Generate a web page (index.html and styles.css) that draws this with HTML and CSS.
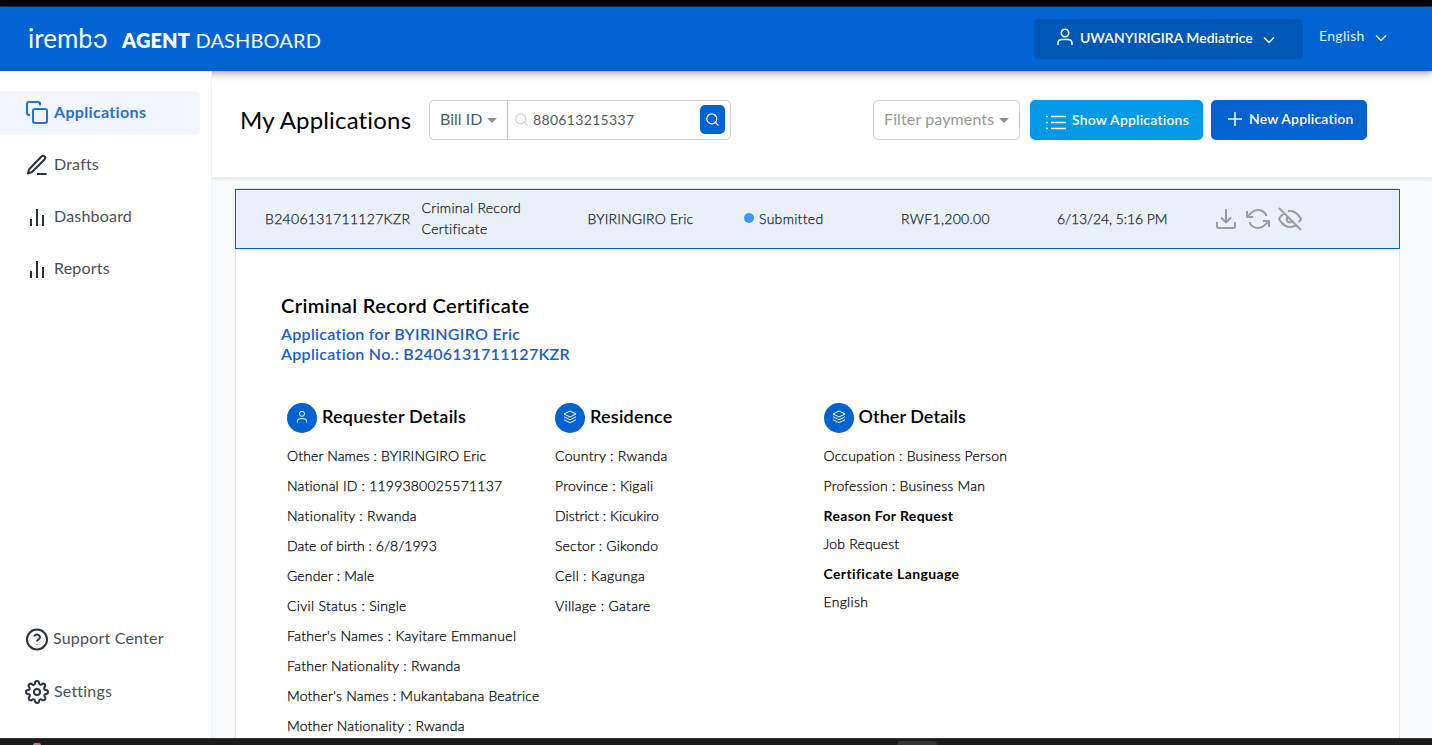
FILE: index.html
```html
<!DOCTYPE html>
<html lang="en">
<head>
<meta charset="utf-8">
<title>Agent Dashboard</title>
<link rel="stylesheet" href="styles.css">
</head>
<body>
<div class="screen">
  <div class="chrome-top"></div>
  <header class="header">
    <div class="brand">
      <span class="logo">irembo</span>
      <span class="product"><b>AGENT</b> <span>DASHBOARD</span></span>
    </div>
    <div class="account">
      <svg class="user-icon" width="18" height="18" viewBox="0 0 18 18"><circle cx="9" cy="5" r="3.7"/><path d="M2 17v-1.500q0-4 4-4h6q4 0 4 4V17"/></svg>
      <span class="account-name">UWANYIRIGIRA Mediatrice</span>
      <svg class="chevron" width="12" height="8" viewBox="0 0 12 8"><path d="M1 1.500l5 5 5-5"/></svg>
    </div>
    <div class="language">
      <span>English</span>
      <svg class="chevron" width="12" height="8" viewBox="0 0 12 8"><path d="M1 1.500l5 5 5-5"/></svg>
    </div>
  </header>
  <div class="body">
    <nav class="sidebar">
      <div class="menu">
        <a class="item active"><svg width="24" height="24" viewBox="0 0 24 24"><rect x="8" y="8" width="14" height="14" rx="2"/><path d="M5 14H4a2 2 0 0 1-2-2V3a2 2 0 0 1 2-2h9a2 2 0 0 1 2 2v1.500"/></svg><span class="t-apps">Applications</span></a>
        <a class="item"><svg width="24" height="24" viewBox="0 0 24 24"><path d="M12 21h9.500M16.500 3.500a2.120 2.120 0 0 1 3 3L7 19l-4 1.500 1-4z"/></svg><span>Drafts</span></a>
        <a class="item"><svg width="24" height="24" viewBox="0 0 24 24"><path d="M18 21V10M12 21V4M6 21V14"/></svg><span>Dashboard</span></a>
        <a class="item"><svg width="24" height="24" viewBox="0 0 24 24"><path d="M18 21V10M12 21V4M6 21V14"/></svg><span>Reports</span></a>
      </div>
      <div class="menu menu-bottom">
        <a class="item"><svg width="24" height="24" viewBox="0 0 24 24"><circle cx="12" cy="12.500" r="10"/><path d="M9.100 9.500a3 3 0 0 1 5.800 1c0 2-3 2.500-3 4M12 17.300v.500"/></svg><span class="t-support">Support Center</span></a>
        <a class="item"><svg width="24" height="24" viewBox="0 0 24 24"><circle cx="12" cy="12" r="3"/><path d="M19.400 15a1.650 1.650 0 0 0 .33 1.820l.06.06a2 2 0 1 1-2.830 2.830l-.06-.06a1.650 1.650 0 0 0-2.800 1.170V21a2 2 0 0 1-4 0v-.09A1.650 1.650 0 0 0 9 19.400a1.650 1.650 0 0 0-1.820.33l-.06.06a2 2 0 1 1-2.830-2.830l.06-.06A1.650 1.650 0 0 0 3.090 14H3a2 2 0 0 1 0-4h.09A1.650 1.650 0 0 0 4.600 9a1.650 1.650 0 0 0-.33-1.820l-.06-.06a2 2 0 1 1 2.830-2.830l.06.06A1.650 1.650 0 0 0 10 3.090V3a2 2 0 0 1 4 0v.09a1.650 1.650 0 0 0 2.820 1.180l.06-.06a2 2 0 1 1 2.830 2.830l-.06.06A1.650 1.650 0 0 0 20.910 10H21a2 2 0 0 1 0 4h-.09a1.650 1.650 0 0 0-1.510 1z"/></svg><span>Settings</span></a>
      </div>
    </nav>
    <main class="main">
      <div class="toolbar">
        <h1>My Applications</h1>
        <div class="search">
          <div class="search-kind"><span>Bill ID</span><i class="caret"></i></div>
          <div class="search-field">
            <svg class="magnifier" width="13" height="13" viewBox="0 0 13 13"><circle cx="5.800" cy="5.800" r="5"/><path d="M9.500 9.500l3 3"/></svg>
            <span>880613215337</span>
            <div class="search-button"><svg width="13" height="13" viewBox="0 0 13 13"><circle cx="5.800" cy="5.800" r="5"/><path d="M9.500 9.500l3 3"/></svg></div>
          </div>
        </div>
        <div class="filter"><span>Filter payments</span><i class="caret"></i></div>
        <div class="button show"><svg width="20" height="15" viewBox="0 0 20 15"><path d="M5 1.500h15M5 7.500h15M5 13.500h15"/><path d="M0 1.500h2M0 7.500h2M0 13.500h2"/></svg><span>Show Applications</span></div>
        <div class="button new"><svg width="14" height="14" viewBox="0 0 14 14"><path d="M7 0v14M0 7h14"/></svg><span>New Application</span></div>
      </div>
      <div class="content">
        <div class="row">
          <span>B2406131711127KZR</span>
          <span>Criminal Record<br>Certificate</span>
          <span class="c-name">BYIRINGIRO Eric</span>
          <span class="c-status"><i class="dot"></i>Submitted</span>
          <span>RWF1,200.00</span>
          <span class="c-date">6/13/24, 5:16 PM</span>
          <span class="actions">
            <svg width="24" height="24" viewBox="0 0 24 24"><path d="M3 15v4.500A1.500 1.500 0 0 0 4.500 21h15a1.500 1.500 0 0 0 1.500-1.500V15M12 2v13M7 10.500l5 5 5-5"/></svg>
            <svg width="24" height="24" viewBox="0 0 24 24"><path d="M1 4v6h6M23 20v-6h-6"/><path d="M20.500 9A9 9 0 0 0 5.600 5.600L1 10m22 4l-4.600 4.400A9 9 0 0 1 3.500 15"/></svg>
            <svg width="24" height="24" viewBox="0 0 24 24"><path d="M17.900 17.900A10 10 0 0 1 12 20C5 20 1 12 1 12a18.500 18.500 0 0 1 5-5.900M9.900 4.200A9 9 0 0 1 12 4c7 0 11 8 11 8a18.500 18.500 0 0 1-2.200 3.200M14.100 14.100a3 3 0 1 1-4.200-4.200M1 1l22 22"/></svg>
          </span>
        </div>
        <section class="details">
          <h2>Criminal Record Certificate</h2>
          <p class="sub s1">Application for BYIRINGIRO Eric</p>
          <p class="sub">Application No.: B2406131711127KZR</p>
          <div class="columns">
            <div class="column">
              <h3><i class="badge"><svg width="14" height="14" viewBox="0 0 14 14"><circle cx="7" cy="3.800" r="2.500"/><path d="M2.300 12.500v-1q0-2.800 2.800-2.800h3.800q2.800 0 2.800 2.800v1"/></svg></i><span>Requester Details</span></h3>
              <p class="snug">Other Names : BYIRINGIRO Eric</p>
              <p>National ID : 1199380025571137</p>
              <p class="wide">Nationality : Rwanda</p>
              <p class="tight">Date of birth : 6/8/1993</p>
              <p class="snug">Gender : Male</p>
              <p class="wide">Civil Status : Single</p>
              <p class="wide">Father's Names : Kayitare Emmanuel</p>
              <p class="wide">Father Nationality : Rwanda</p>
              <p>Mother's Names : Mukantabana Beatrice</p>
              <p>Mother Nationality : Rwanda</p>
            </div>
            <div class="column">
              <h3><i class="badge"><svg width="14" height="14" viewBox="0 0 14 14"><path d="M7 1l6 3-6 3-6-3zM1 6.800l6 3 6-3M1 9.700l6 3 6-3"/></svg></i><span>Residence</span></h3>
              <p class="wide">Country : Rwanda</p>
              <p>Province : Kigali</p>
              <p class="tight">District : Kicukiro</p>
              <p>Sector : Gikondo</p>
              <p class="wide">Cell : Kagunga</p>
              <p class="wide">Village : Gatare</p>
            </div>
            <div class="column">
              <h3><i class="badge"><svg width="14" height="14" viewBox="0 0 14 14"><path d="M7 1l6 3-6 3-6-3zM1 6.800l6 3 6-3M1 9.700l6 3 6-3"/></svg></i><span class="h-oth">Other Details</span></h3>
              <p>Occupation : Business Person</p>
              <p>Profession : Business Man</p>
              <p class="label">Reason For Request</p>
              <p class="value">Job Request</p>
              <p class="label">Certificate Language</p>
              <p class="value wide">English</p>
            </div>
          </div>
        </section>
      </div>
    </main>
  </div>
  <div class="chrome-bottom"><i class="pink"></i><i class="tab"></i></div>
</div>
</body>
</html>
```
FILE: styles.css
```css
* { box-sizing: border-box; }
body { margin: 0; font-family: Lato, "Open Sans", sans-serif; font-size: 14px; color: #000; }
h1, h2, h3, p { margin: 0; }
i { font-style: normal; display: block; flex: none; }
span { white-space: nowrap; }
svg { display: block; flex: none; fill: none; stroke: currentColor; stroke-width: 2; stroke-linejoin: round; }

.screen { height: 745px; display: flex; flex-direction: column; overflow: hidden; }
.chrome-top { height: 7px; flex: none; background: #060606; border-bottom: 1px solid #2c3136; }
.chrome-bottom { height: 7px; flex: none; background: #1b1b1b; border-top: 1px solid #363636; display: flex; align-items: flex-end; overflow: hidden; z-index: 3; }
.pink { width: 8px; height: 2px; margin-left: 33px; background: #b77c98; border-radius: 4px 4px 0 0; }
.tab { width: 40px; height: 4px; margin-left: 856px; background: #343434; border-radius: 4px 4px 0 0; }

.header { height: 64px; flex: none; background: #0063d1; color: #fff; display: flex; align-items: flex-start; box-shadow: 0 2px 8px rgba(0,0,0,.4); z-index: 1; }
.brand { display: flex; align-items: flex-start; width: 1034px; padding: 16px 0 0 28px; }
.logo { position: relative; width: 94px; font-size: 26px; line-height: 31px; letter-spacing: 0; font-weight: 400; }
.logo::after { content: ""; position: absolute; left: 63px; top: 15px; width: 6px; height: 4px; background: #0063d1; }
.product { font-size: 20px; line-height: 34px; letter-spacing: .15px; }
.product b { font-weight: 800; }
.account { width: 269px; height: 40px; margin-top: 12px; padding: 0 0 0 22px; display: flex; align-items: center; background: #0057b8; border-radius: 4px; }
.user-icon { stroke-width: 1.6; margin-top: -4px; }
.account-name { margin: -3px 0 0 6px; width: 173px; font-weight: 600; }
.chevron { stroke-width: 1.4; margin-left: 10px; margin-top: 2px; }
.language { display: flex; align-items: center; height: 20px; margin: 20px 0 0 16px; color: #e4eefa; }
.language span { width: 46px; margin-top: -3px; letter-spacing: .3px; }
.language .chevron { margin-top: 1px; }

.body { flex: 1; min-height: 0; display: flex; }
.sidebar { width: 212px; flex: none; background: #fff; border-right: 1px solid #eef2f7; display: flex; flex-direction: column; justify-content: space-between; padding: 20px 0 24px; z-index: 2; }
.menu { display: flex; flex-direction: column; gap: 8px; }
.menu-bottom { gap: 9px; }
.item { height: 44px; width: 200px; padding-left: 25px; display: flex; align-items: center; font-size: 16px; color: #4a5058; border-radius: 0 6px 6px 0; }
.item svg { color: #29323d; }
.item span { margin: -3px 0 0 5px; letter-spacing: .2px; }
.item.active { background: #f1f6fe; color: #2a6fd6; font-weight: 700; }
.item.active svg { color: #1f74de; }
.item .t-apps { letter-spacing: .33px; }
.item .t-support { margin-left: 4px; }

.main { flex: 1; min-width: 0; background: #f7f9fb; display: flex; flex-direction: column; }
.toolbar { height: 107px; flex: none; background: #fff; border-bottom: 1px solid #e9f1f5; box-shadow: 0 1px 3px rgba(0,0,0,.09); padding: 29px 0 0 28px; display: flex; align-items: flex-start; }
h1 { width: 189px; font-size: 24px; line-height: 40px; font-weight: 400; white-space: nowrap; letter-spacing: .17px; }
.search { width: 302px; height: 40px; border: 1px solid #ced4da; border-radius: 5px; display: flex; color: #565a5e; }
.search-kind { width: 78px; flex: none; border-right: 1px solid #ced4da; padding-left: 10px; display: flex; align-items: center; font-size: 16px; }
.search-kind span { width: 42px; margin-top: -3px; }
.caret { border: 5px solid transparent; border-top-color: #8e8e8e; border-bottom: 0; margin-left: 5px; }
.search-field { flex: 1; display: flex; align-items: center; padding: 0 5px 2px 7px; font-size: 14px; }
.search-field span { flex: 1; margin: 1px 0 0 5px; letter-spacing: .33px; }
.magnifier { color: #ced4da; stroke-width: 1.2; }
.search-button { width: 25px; height: 29px; background: #0063d1; color: #fff; border-radius: 5px; display: grid; place-items: center; }
.search-button svg { stroke-width: 1.2; }
.filter { width: 147px; height: 40px; margin-left: 142px; border: 1px solid #ced4da; border-radius: 5px; display: flex; align-items: center; padding-left: 10px; font-size: 16px; color: #999; }
.filter span { width: 111px; margin-top: -3px; letter-spacing: .12px; }
.filter .caret { margin-left: 4px; }
.button { height: 40px; border-radius: 5px; display: flex; align-items: center; color: #fff; font-weight: 600; }
.show { width: 173px; margin-left: 10px; padding: 0 0 1px 16px; background: #0099e6; letter-spacing: .2px; }
.show svg { margin-top: 5px; stroke-width: 1.7; }
.show span { margin-left: 6px; }
.new { width: 156px; margin-left: 8px; padding: 0 0 3px 17px; background: #0063d1; letter-spacing: .16px; }
.new svg { stroke-width: 1.5; margin-top: 1px; }
.new span { margin-left: 7px; }

.content { flex: 1; min-height: 0; overflow: hidden; margin: 10px 32px 0 23px; display: flex; flex-direction: column; border-top: 1px solid #dcdfe3; }
.row { height: 60px; flex: none; border: 1px solid #0b5fc5; background: #e9f0f8; display: grid; grid-template-columns: 156.500px 166px 156.500px 157px 156px 159px 1fr; align-items: center; padding: 0 0 2px 29px; line-height: 21px; color: #181b1f; font-weight: 300; letter-spacing: .3px; -webkit-text-stroke: .25px currentColor; }
.c-name { letter-spacing: .18px; }
.c-status { display: flex; align-items: center; }
.c-date { letter-spacing: -.1px; }
.dot { width: 10px; height: 10px; margin-right: 5px; border-radius: 50%; background: #3b99fc; }
.actions { display: flex; gap: 8px; color: #9c9c9c; margin: 2px 0 0 -2px; }
.details { flex: 1; min-height: 0; overflow: hidden; background: #fff; border: solid #e1e4e8; border-width: 1px 1px 0; padding: 43px 0 0 45px; }
h2 { font-size: 20px; line-height: 24px; font-weight: 600; letter-spacing: .4px; }
.sub { font-size: 16px; line-height: 20px; font-weight: 600; color: #1a5dcb; letter-spacing: .29px; }
.s1 { margin-top: 7px; }
.columns { display: grid; grid-template-columns: 268px 268.500px 268px; margin: 39px 0 0 6px; }
h3 { height: 30px; margin-bottom: 8px; display: flex; align-items: center; font-size: 18px; font-weight: 600; }
h3 span { margin: -4px 0 0 5px; letter-spacing: .22px; }
h3 .h-oth { letter-spacing: .05px; }
.badge { width: 30px; height: 30px; border-radius: 50%; background: #0063d1; color: #fff; display: grid; place-items: center; }
.badge svg { stroke-width: 1; margin-top: -2px; }
.column p { line-height: 30px; white-space: nowrap; font-weight: 300; letter-spacing: .2px; -webkit-text-stroke: .25px currentColor; }
.column .snug { letter-spacing: .15px; }
.column .wide { letter-spacing: .3px; }
.column .tight { letter-spacing: .03px; }
.column .label { font-weight: 700; letter-spacing: .38px; -webkit-text-stroke: 0; }
.column .value { line-height: 28px; margin-top: -1px; margin-bottom: 1px; }
```
